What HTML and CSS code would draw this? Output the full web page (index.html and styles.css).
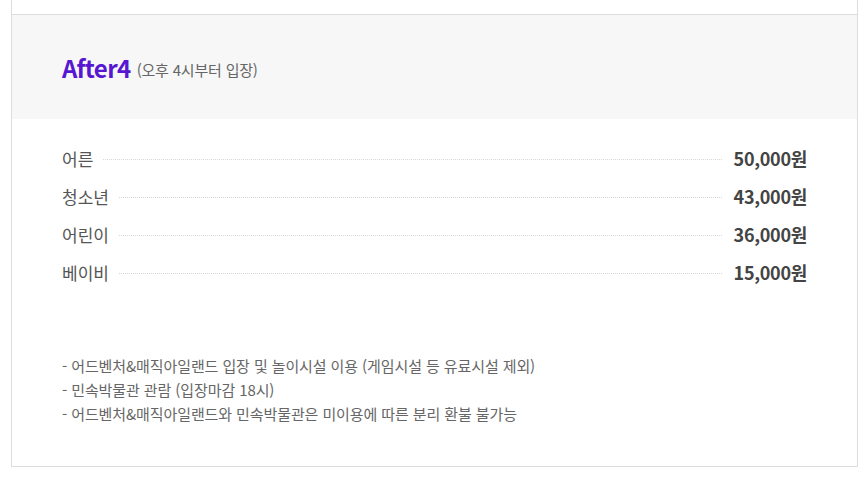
FILE: index.html
```html
<!DOCTYPE html>
<html lang="ko">
<head>
<meta charset="utf-8">
<link rel="stylesheet" href="styles.css">
</head>
<body>
<div class="wrap">
  <div class="top"></div>
  <div class="head">
    <span class="title">After4</span>
    <span class="sub">(오후 4시부터 입장)</span>
  </div>
  <ul class="list">
    <li class="row"><span class="label">어른</span><span class="dots"></span><span class="price">50,000원</span></li>
    <li class="row"><span class="label">청소년</span><span class="dots"></span><span class="price">43,000원</span></li>
    <li class="row"><span class="label">어린이</span><span class="dots"></span><span class="price">36,000원</span></li>
    <li class="row"><span class="label">베이비</span><span class="dots"></span><span class="price">15,000원</span></li>
  </ul>
  <ul class="notes">
    <li>- 어드벤처&amp;매직아일랜드 입장 및 놀이시설 이용 (게임시설 등 유료시설 제외)</li>
    <li>- 민속박물관 관람 (입장마감 18시)</li>
    <li>- 어드벤처&amp;매직아일랜드와 민속박물관은 미이용에 따른 분리 환불 불가능</li>
  </ul>
</div>
</body>
</html>
```
FILE: styles.css
```css
* { box-sizing: border-box; }
html, body { margin: 0; padding: 0; background: #fff; }
body { font-family: "Noto Sans CJK KR", "Noto Sans", sans-serif; }
.wrap {
  margin-left: 11px;
  width: 847px;
  border-left: 1px solid #dddddd;
  border-right: 1px solid #dddddd;
  border-bottom: 1px solid #dddddd;
}
.top { height: 15px; border-bottom: 1px solid #dddddd; }
.head {
  background: #f7f7f7;
  height: 104px;
  padding-left: 50px;
  display: flex;
  align-items: center;
  gap: 6px;
}
.title {
  font-size: 24px;
  font-weight: 700;
  color: #5717d2;
  letter-spacing: -0.6px;
}
.sub { font-size: 15px; color: #666; letter-spacing: -0.2px; padding-top: 4px; }
.list { list-style: none; margin: 0; padding: 20px 50px 0 50px; }
.row {
  height: 38px;
  display: flex;
  align-items: center;
}
.label { font-size: 17px; color: #555; letter-spacing: 0; }
.dots {
  flex: 1;
  border-bottom: 1px dotted #d6d6d6;
  margin: 2px 12px 0 10px;
}
.price { font-size: 18px; font-weight: 700; color: #444; letter-spacing: -0.3px; }
.notes {
  list-style: none;
  margin: 0;
  padding: 63px 50px 40px 50px;
  font-size: 15px;
  line-height: 24px;
  color: #666;
  letter-spacing: -0.1px;
}
```
